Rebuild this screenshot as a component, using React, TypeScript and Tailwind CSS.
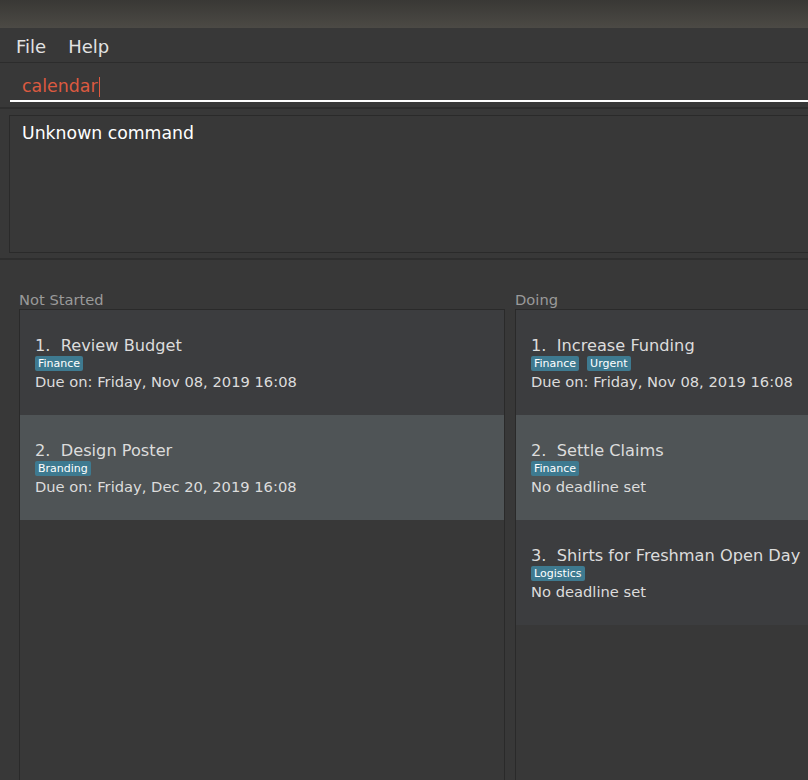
type Task = {
  title: string
  tags: string[]
  due: string
}

const notStarted: Task[] = [
  { title: 'Review Budget', tags: ['Finance'], due: 'Due on: Friday, Nov 08, 2019 16:08' },
  { title: 'Design Poster', tags: ['Branding'], due: 'Due on: Friday, Dec 20, 2019 16:08' },
]

const doing: Task[] = [
  { title: 'Increase Funding', tags: ['Finance', 'Urgent'], due: 'Due on: Friday, Nov 08, 2019 16:08' },
  { title: 'Settle Claims', tags: ['Finance'], due: 'No deadline set' },
  { title: 'Shirts for Freshman Open Day', tags: ['Logistics'], due: 'No deadline set' },
]

function TaskCard({ task, index }: { task: Task; index: number }) {
  const even = index % 2 === 1
  return (
    <div
      className={`flex h-[105px] flex-col justify-center whitespace-nowrap pl-[15px] pt-[1px] ${
        even ? 'bg-[#4f5456]' : 'bg-[#3c3d3f]'
      }`}
    >
      <div className="text-[16.2px] leading-[20px] text-[#dcdcdc]">
        {index + 1}.&nbsp; {task.title}
      </div>
      <div className="flex gap-[8px]">
        {task.tags.map((tag) => (
          <span
            key={tag}
            className="rounded-[2px] bg-[#3e7a90] px-[3px] text-[11px] leading-[15px] text-white"
          >
            {tag}
          </span>
        ))}
      </div>
      <div className="mt-[2px] text-[14.7px] leading-[17px] text-[#dcdcdc]">{task.due}</div>
    </div>
  )
}

function Column({ label, tasks, className }: { label: string; tasks: Task[]; className: string }) {
  return (
    <div className={`flex shrink-0 flex-col ${className}`}>
      <div className="h-[22px] pt-[4px] text-[14.7px] leading-[18px] text-[#9a9a9a]">{label}</div>
      <div className="flex-1 border-l border-r border-t border-[#2a2a2a] bg-[#383838]">
        {tasks.map((t, i) => (
          <TaskCard key={t.title} task={t} index={i} />
        ))}
      </div>
    </div>
  )
}

export default function App() {
  return (
    <div
      className="flex h-[780px] w-[808px] flex-col overflow-hidden bg-[#383838]"
      style={{ fontFamily: '"DejaVu Sans", "Liberation Sans", sans-serif' }}
    >
      <div className="h-[28px] shrink-0 bg-gradient-to-b from-[#393835] to-[#4c4a45]" />

      <div className="flex h-[35px] shrink-0 items-center gap-[22px] border-b border-[#2c2c2c] bg-[#383838] pl-[16px] pt-[2px] text-[18px] text-[#e2e2e2]">
        <span>File</span>
        <span>Help</span>
      </div>

      <div className="h-[46px] shrink-0 border-b-2 border-[#2e2e2e] pl-[10px] pt-[10px]">
        <div className="flex h-[29px] items-center border-b-2 border-white pl-[12px] text-[17.4px] text-[#dc5a40]">
          calendar
          <span className="ml-[1px] inline-block h-[20px] w-px bg-[#dc5a40]" />
        </div>
      </div>

      <div className="h-[151px] w-[840px] shrink-0 border-b-2 border-[#2e2e2e] pl-[9px] pt-[6px]">
        <div className="h-[138px] border border-[#2a2a2a] bg-[#383838] px-[12px] pt-[6px] text-[17.3px] leading-[22px] text-white">
          Unknown command
        </div>
      </div>

      <div className="flex min-h-0 flex-1 gap-[10px] pl-[19px] pt-[27px]">
        <Column label="Not Started" tasks={notStarted} className="w-[486px]" />
        <Column label="Doing" tasks={doing} className="w-[486px]" />
      </div>
    </div>
  )
}
